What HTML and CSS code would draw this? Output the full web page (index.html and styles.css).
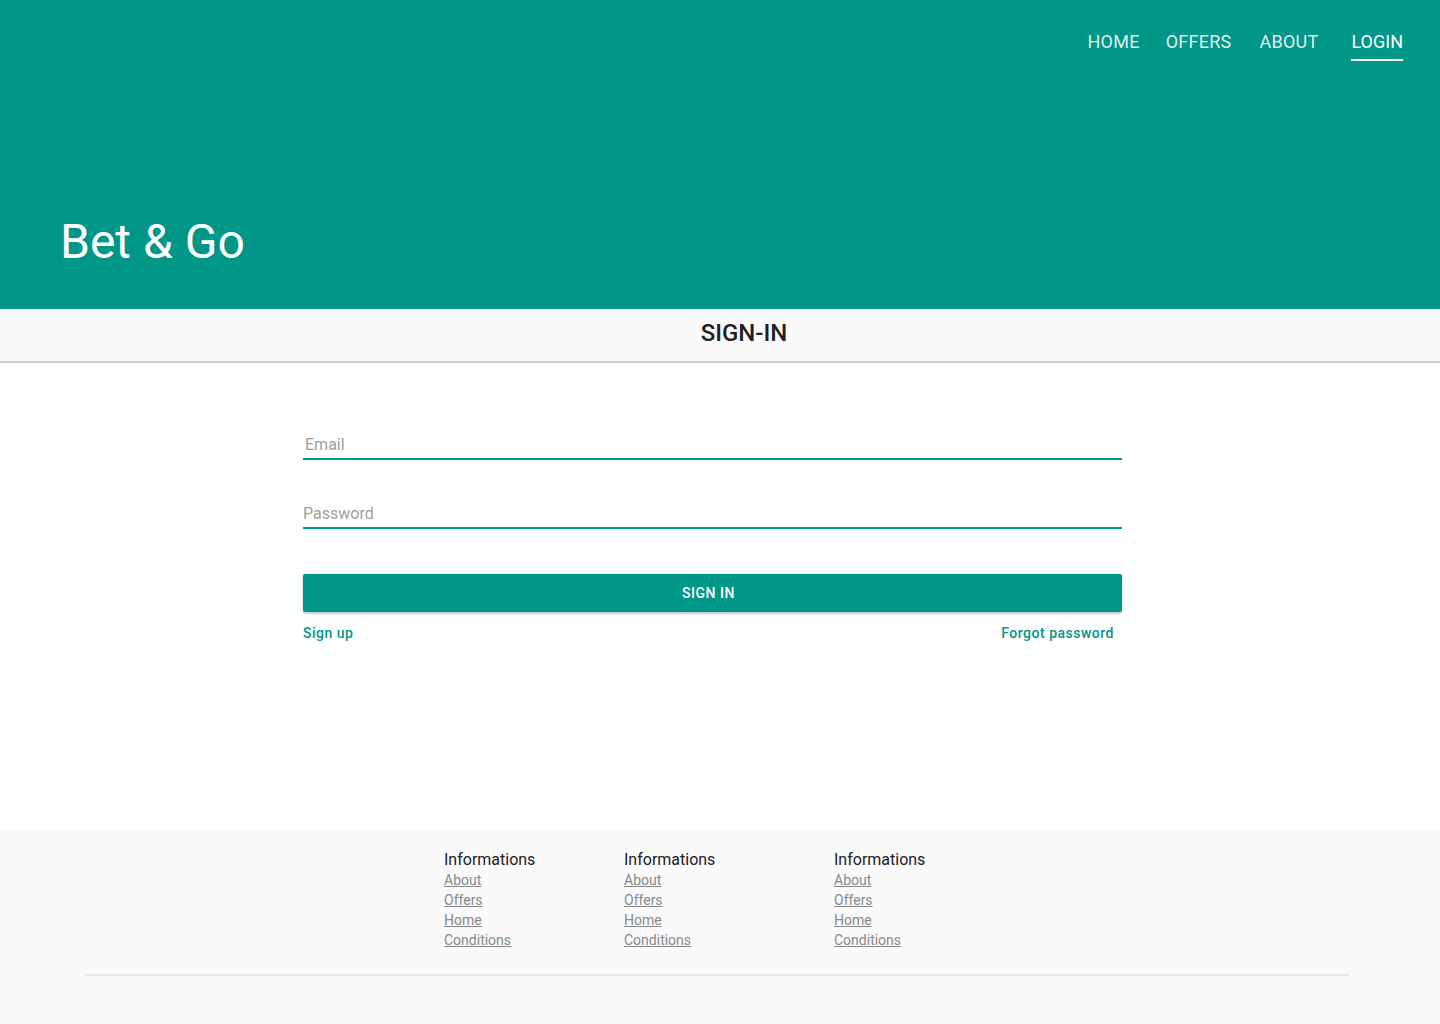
FILE: index.html
```html
<!DOCTYPE html>
<html lang="en">
<head>
<meta charset="utf-8">
<title>Bet &amp; Go</title>
<link rel="stylesheet" href="styles.css">
</head>
<body>
<header class="hero">
  <nav class="nav">
    <a class="nav-link" href="#">HOME</a>
    <a class="nav-link" href="#">OFFERS</a>
    <a class="nav-link" href="#">ABOUT</a>
    <a class="nav-link active" href="#">LOGIN</a>
  </nav>
  <h1 class="brand">Bet &amp; Go</h1>
</header>
<div class="tabbar"><h2 class="tab-title">SIGN-IN</h2></div>
<main class="main">
  <form class="form">
    <label class="field"><input class="input" type="email" placeholder="Email"></label>
    <label class="field"><input class="input" type="password" placeholder="Password"></label>
    <button class="btn" type="button">SIGN IN</button>
    <div class="links">
      <a class="small-link" href="#">Sign up</a>
      <a class="small-link forgot" href="#">Forgot password</a>
    </div>
  </form>
</main>
<footer class="footer">
  <div class="cols">
    <div class="col c1">
      <h5 class="col-title">Informations</h5>
      <a href="#">About</a><a href="#">Offers</a><a href="#">Home</a><a href="#">Conditions</a>
    </div>
    <div class="col c2">
      <h5 class="col-title">Informations</h5>
      <a href="#">About</a><a href="#">Offers</a><a href="#">Home</a><a href="#">Conditions</a>
    </div>
    <div class="col c3">
      <h5 class="col-title">Informations</h5>
      <a href="#">About</a><a href="#">Offers</a><a href="#">Home</a><a href="#">Conditions</a>
    </div>
  </div>
  <div class="footer-line"></div>
</footer>
</body>
</html>
```
FILE: styles.css
```css
* { box-sizing: border-box; }
html, body { margin: 0; padding: 0; }
body {
  font-family: Roboto, "Liberation Sans", sans-serif;
  background: #fff;
  color: #212121;
  width: 1440px;
  min-height: 1024px;
  display: flex;
  flex-direction: column;
}
.hero {
  background: #009688;
  height: 309px;
  display: flex;
  flex-direction: column;
  padding: 0 37px 0 60px;
}
.nav {
  display: flex;
  justify-content: flex-end;
  gap: 26px;
  padding-top: 31px;
}
.nav-link {
  color: rgba(255,255,255,0.88);
  text-decoration: none;
  font-size: 18px;
  line-height: 22px;
  letter-spacing: 0.25px;
  padding-bottom: 6px;
  border-bottom: 2px solid transparent;
}
.nav-link:nth-child(3) { margin-left: 2px; }
.nav-link.active {
  color: #fff;
  border-bottom-color: #fff;
  margin-left: 7px;
  letter-spacing: 0;
}
.brand {
  margin: 0;
  margin-top: 153px;
  font-weight: 400;
  font-size: 48px;
  line-height: 56px;
  color: #fff;
}
.tabbar {
  background: #fafafa;
  height: 54px;
  border-bottom: 2px solid #cfcfcf;
  display: flex;
  align-items: center;
  justify-content: center;
  padding-left: 48px;
  padding-bottom: 4px;
}
.tab-title {
  margin: 0;
  font-size: 24px;
  font-weight: 500;
  color: #212121;
  line-height: 28px;
}
.main {
  flex: 0 0 auto;
  height: 467px;
  padding-top: 70px;
}
.form {
  width: 819px;
  margin-left: 303px;
  display: flex;
  flex-direction: column;
}
.field {
  display: block;
  margin-bottom: 43px;
}
.field + .field { margin-bottom: 45px; }
.input {
  width: 100%;
  border: 0;
  border-bottom: 2px solid #009688;
  background: transparent;
  font-family: inherit;
  font-size: 16px;
  height: 27px;
  padding: 0 0 3px 2px;
  outline: none;
  color: #212121;
}
.field + .field .input { padding-left: 0; padding-bottom: 3px; height: 26px; }
.input::placeholder { color: #9e9e9e; }
.btn {
  height: 38px;
  border: 0;
  border-radius: 2px;
  background: #009688;
  color: #fff;
  font-family: inherit;
  font-size: 14px;
  font-weight: 500;
  letter-spacing: 0.5px;
  box-shadow: 0 2px 2px 0 rgba(0,0,0,0.14), 0 1px 3px 0 rgba(0,0,0,0.12);
  padding: 0 8px 0 0;
}
.links {
  display: flex;
  justify-content: space-between;
  padding: 12px 8px 0 0;
}
.small-link {
  color: #009688;
  font-size: 14px;
  font-weight: 500;
  letter-spacing: 0.5px;
  text-decoration: none;
  line-height: 18px;
}
.footer {
  flex: 1;
  background: #fafafa;
  padding-top: 20px;
}
.cols {
  display: flex;
  padding-left: 444px;
}
.col { display: flex; flex-direction: column; align-items: flex-start; }
.c1 { width: 180px; }
.c2 { width: 210px; }
.col-title {
  margin: 0;
  font-size: 16px;
  font-weight: 400;
  line-height: 20px;
  color: #212121;
}
.col a {
  font-size: 14px;
  line-height: 20px;
  color: #888;
  text-decoration: underline;
}
.footer-line {
  margin: 24px 90px 0 85px;
  height: 2px;
  background: #ebebeb;
}
```
